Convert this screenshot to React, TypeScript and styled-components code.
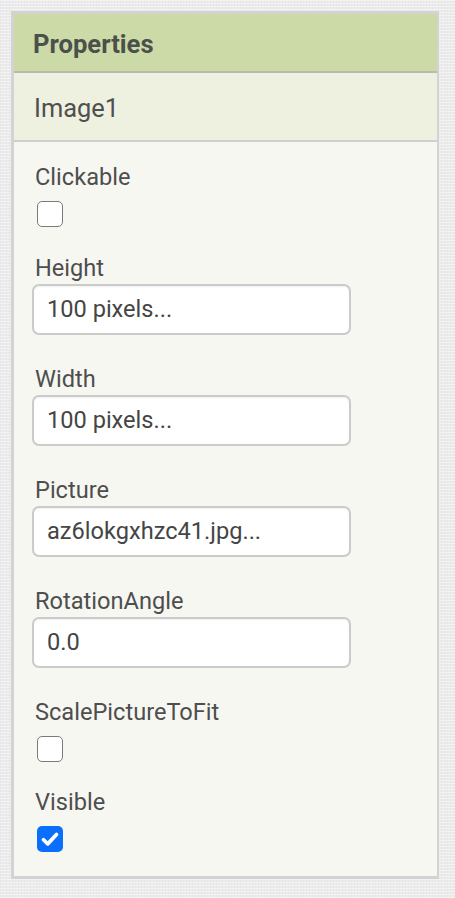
import React from "react";
import styled, { createGlobalStyle } from "styled-components";

const GlobalStyle = createGlobalStyle`
  html, body {
    margin: 0;
    padding: 0;
  }
  body {
    min-height: 898px;
    background-color: #ebebeb;
    background-image:
      repeating-linear-gradient(0deg, rgba(255,255,255,0.45) 0px, rgba(255,255,255,0.45) 1px, transparent 1px, transparent 3px),
      repeating-linear-gradient(90deg, rgba(0,0,0,0.025) 0px, rgba(0,0,0,0.025) 1px, transparent 1px, transparent 3px);
    font-family: Roboto, "Noto Sans", "Liberation Sans", sans-serif;
  }
`;

const Page = styled.div`
  padding: 11px 0 0 11px;
`;

const Panel = styled.section`
  width: 423px;
  border: 3px solid #d3d3d3;
  border-right-width: 2.5px;
  background: #f7f7f2;
`;

const Header = styled.div`
  height: 59px;
  box-sizing: border-box;
  padding: 15px 0 0 19px;
  background: #ccdaa8;
  border-bottom: 2px solid #b7bab0;
  color: #4b504a;
  font-size: 25.6px;
  font-weight: 700;
  line-height: 30px;
`;

const SubHeader = styled.div`
  height: 69px;
  box-sizing: border-box;
  padding: 20px 0 0 20px;
  background: #eef1e0;
  border-bottom: 2px solid #cfcfcc;
  color: #4f4f4f;
  font-size: 25.4px;
  font-weight: 400;
  line-height: 30px;
`;

const Body = styled.div`
  padding: 21px 0 24px 18px;
  display: flex;
  flex-direction: column;
`;

const Group = styled.div<{ $kind: "check" | "text"; $last?: boolean }>`
  display: flex;
  flex-direction: column;
  align-items: flex-start;
  margin-bottom: ${(p) => (p.$last ? "0" : p.$kind === "check" ? "26.5px" : "30px")};
`;

const Label = styled.div`
  margin-left: 3px;
  color: #4e4e4e;
  font-size: 23.6px;
  line-height: 28px;
`;

const Box = styled.span<{ $checked?: boolean }>`
  margin: 10px 0 0 5px;
  width: 26px;
  height: 26px;
  box-sizing: border-box;
  border-radius: 5px;
  display: flex;
  align-items: center;
  justify-content: center;
  background: ${(p) => (p.$checked ? "#0b6ffd" : "#ffffff")};
  border: ${(p) => (p.$checked ? "none" : "1.3px solid #7b7b7b")};
`;

const TextBox = styled.div`
  margin-top: 2px;
  width: 319px;
  height: 51px;
  box-sizing: border-box;
  border: 2px solid #cbcbcb;
  border-radius: 7px;
  background: #ffffff;
  box-shadow: inset 0 1px 2px rgba(0, 0, 0, 0.06);
  padding: 0 0 0 13px;
  display: flex;
  align-items: center;
  color: #454545;
  font-size: 23.6px;
`;

type Prop =
  | { name: string; kind: "check"; checked: boolean }
  | { name: string; kind: "text"; value: string };

const props: Prop[] = [
  { name: "Clickable", kind: "check", checked: false },
  { name: "Height", kind: "text", value: "100 pixels..." },
  { name: "Width", kind: "text", value: "100 pixels..." },
  { name: "Picture", kind: "text", value: "az6lokgxhzc41.jpg..." },
  { name: "RotationAngle", kind: "text", value: "0.0" },
  { name: "ScalePictureToFit", kind: "check", checked: false },
  { name: "Visible", kind: "check", checked: true },
];

const Check = () => (
  <svg width="20" height="20" viewBox="0 0 16 16" aria-hidden="true">
    <path
      d="M2.8 8.6 L6.2 11.9 L13.2 4.4"
      fill="none"
      stroke="#ffffff"
      strokeWidth="3"
      strokeLinecap="round"
      strokeLinejoin="round"
    />
  </svg>
);

export default function App() {
  return (
    <>
      <GlobalStyle />
      <Page>
        <Panel>
          <Header>Properties</Header>
          <SubHeader>Image1</SubHeader>
          <Body>
            {props.map((p, i) => (
              <Group key={p.name} $kind={p.kind} $last={i === props.length - 1}>
                <Label>{p.name}</Label>
                {p.kind === "check" ? (
                  <Box $checked={p.checked} role="checkbox" aria-checked={p.checked}>
                    {p.checked && <Check />}
                  </Box>
                ) : (
                  <TextBox>{p.value}</TextBox>
                )}
              </Group>
            ))}
          </Body>
        </Panel>
      </Page>
    </>
  );
}
